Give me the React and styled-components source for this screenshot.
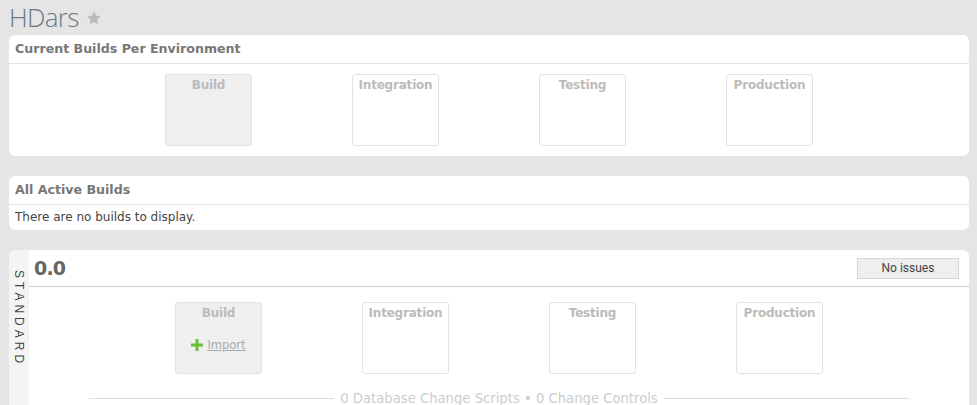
import React from 'react';
import styled, { createGlobalStyle } from 'styled-components';

const environments = ['Build', 'Integration', 'Testing', 'Production'];

const GlobalStyle = createGlobalStyle`
  html, body {
    margin: 0;
    padding: 0;
    background: #e5e5e5;
  }
  body {
    font-family: "DejaVu Sans", Verdana, sans-serif;
  }
`;

const Page = styled.div`
  padding: 0 8px 0 9px;
  width: 960px;
  height: 405px;
  overflow: hidden;
`;

const TitleRow = styled.div`
  display: flex;
  align-items: center;
  gap: 7px;
  height: 35px;
`;

const Title = styled.h1`
  margin: 0;
  font-family: "Open Sans", sans-serif;
  font-weight: 300;
  font-size: 26px;
  line-height: 35px;
  color: #6e7884;
  letter-spacing: -0.7px;
`;

const Panel = styled.section`
  background: #fff;
  border-radius: 6px;
  margin-bottom: 20px;
  overflow: hidden;
`;

const PanelHeader = styled.h2`
  margin: 0;
  padding: 0 6px;
  height: 28px;
  line-height: 28px;
  font-size: 12.6px;
  font-weight: bold;
  color: #777;
  border-bottom: 1px solid #e3e3e3;
`;

const PanelText = styled.p`
  margin: 0;
  padding: 0 6px;
  height: 25px;
  line-height: 25px;
  font-size: 12px;
  color: #444;
`;

const BoxRow = styled.div`
  display: flex;
  justify-content: center;
  gap: 100px;
  padding: ${p => p.$pad || '10px 0'};
`;

const EnvBox = styled.div`
  width: 85px;
  height: 70px;
  border: 1px solid #e2e2e2;
  border-radius: 3px;
  background: ${p => (p.$active ? '#efefef' : '#fff')};
  display: flex;
  flex-direction: column;
  align-items: center;
`;

const EnvLabel = styled.div`
  font-size: 12px;
  font-weight: bold;
  color: #bbb;
  margin-top: 3px;
  letter-spacing: -0.2px;
`;

const ImportLink = styled.a`
  display: flex;
  align-items: center;
  gap: 4px;
  margin-top: 18px;
  font-size: 11.5px;
  color: #aaa;
  text-decoration: underline;
  cursor: pointer;
`;

const StreamPanel = styled(Panel)`
  display: flex;
  border-radius: 6px 6px 0 0;
  margin-bottom: 0;
  height: 160px;
`;

const SideTab = styled.div`
  width: 20px;
  background: #f4f4f4;
  display: flex;
  justify-content: flex-start;
  align-items: center;
  padding-top: 20px;
  box-sizing: border-box;
  font-family: "Liberation Sans", Arial, sans-serif;
  font-size: 12px;
  letter-spacing: 4px;
  color: #444;
  writing-mode: vertical-rl;
`;

const StreamBody = styled.div`
  flex: 1;
  display: flex;
  flex-direction: column;
`;

const StreamHeader = styled.div`
  display: flex;
  align-items: center;
  justify-content: space-between;
  height: 36px;
  padding: 0 10px 0 5px;
  border-bottom: 1px solid #ccc;
`;

const Version = styled.div`
  font-size: 19px;
  font-weight: bold;
  color: #666;
  letter-spacing: -0.8px;
`;

const IssuesButton = styled.button`
  width: 102px;
  height: 21px;
  background: #efefef;
  border: 1px solid #d6d6d6;
  font-family: Roboto, "Liberation Sans", sans-serif;
  font-size: 12px;
  color: #444;
  padding: 0;
`;

const Summary = styled.div`
  display: flex;
  align-items: center;
  gap: 6px;
  margin: 17px 60px 0 60px;
  font-size: 13.2px;
  color: #ccc;
  white-space: nowrap;
  &::before, &::after {
    content: '';
    flex: 1;
    height: 1px;
    background: #ddd;
  }
`;

const PlusIcon = () => (
  <svg width="12" height="12" viewBox="0 0 12 12">
    <path d="M4.5 0h3v4.5H12v3H7.5V12h-3V7.5H0v-3h4.5z" fill="#6cbf3a" />
  </svg>
);

const StarIcon = () => (
  <svg width="16" height="16" viewBox="0 0 24 24">
    <path
      d="M12 1.8l3.1 6.6 7.2.9-5.3 5 1.4 7.1L12 17.9l-6.4 3.5L7 14.3l-5.3-5 7.2-.9z"
      fill="#bbb"
    />
  </svg>
);

const App = () => (
  <>
    <GlobalStyle />
    <Page>
      <TitleRow>
        <Title>HDars</Title>
        <StarIcon />
      </TitleRow>

      <Panel>
        <PanelHeader>Current Builds Per Environment</PanelHeader>
        <BoxRow>
          {environments.map((env, i) => (
            <EnvBox key={env} $active={i === 0}>
              <EnvLabel>{env}</EnvLabel>
            </EnvBox>
          ))}
        </BoxRow>
      </Panel>

      <Panel>
        <PanelHeader>All Active Builds</PanelHeader>
        <PanelText>There are no builds to display.</PanelText>
      </Panel>

      <StreamPanel>
        <SideTab>STANDARD</SideTab>
        <StreamBody>
          <StreamHeader>
            <Version>0.0</Version>
            <IssuesButton>No issues</IssuesButton>
          </StreamHeader>
          <BoxRow $pad="15px 0 0">
            {environments.map((env, i) => (
              <EnvBox key={env} $active={i === 0}>
                <EnvLabel>{env}</EnvLabel>
                {i === 0 && (
                  <ImportLink>
                    <PlusIcon />
                    Import
                  </ImportLink>
                )}
              </EnvBox>
            ))}
          </BoxRow>
          <Summary>0 Database Change Scripts • 0 Change Controls</Summary>
        </StreamBody>
      </StreamPanel>
    </Page>
  </>
);

export default App;
